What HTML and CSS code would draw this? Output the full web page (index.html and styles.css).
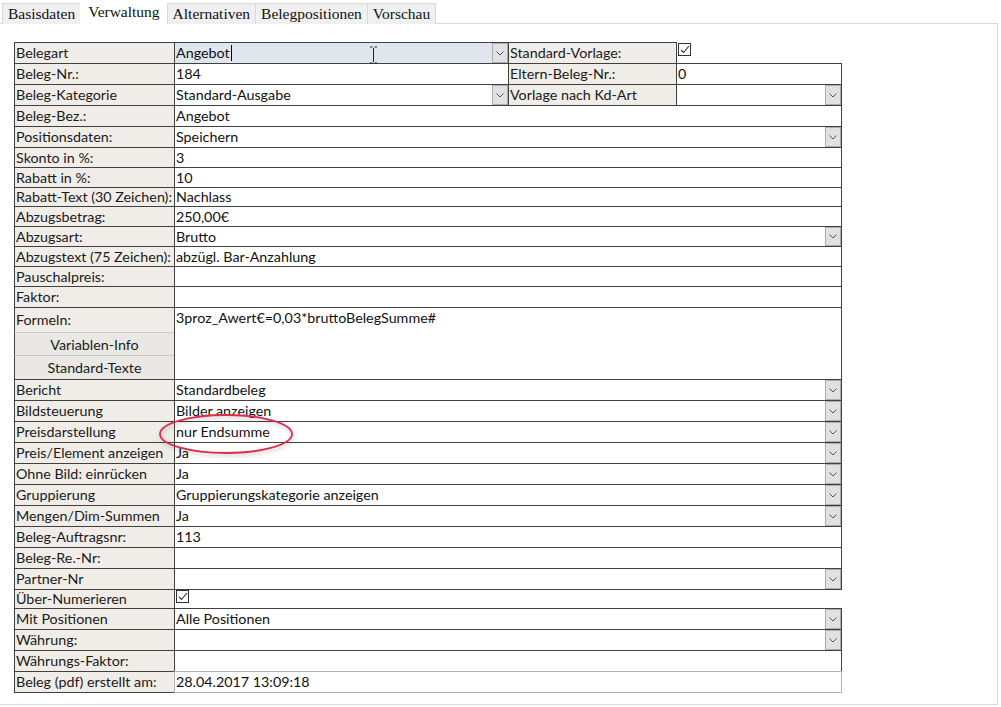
FILE: index.html
```html
<!DOCTYPE html>
<html lang="de">
<head>
    <meta charset="UTF-8">
    <title>Beleg - Verwaltung</title>
    <link rel="stylesheet" href="styles.css">
</head>
<body>
    <div class="tabs">
        <span class="tab">Basisdaten</span>
        <span class="tab active">Verwaltung</span>
        <span class="tab">Alternativen</span>
        <span class="tab">Belegpositionen</span>
        <span class="tab">Vorschau</span>
    </div>

    <div class="panel">
        <div class="form">
            <!-- Kopfbereich mit zweiter Spalte -->
            <div class="row h21">
                <div class="cell lbl">Belegart</div>
                <div class="cell val w-mid focus">Angebot<span class="caret"></span><span class="drop"><svg width="8" height="5"><path d="M0.5 0.5 L4 4 L7.5 0.5" /></svg></span></div>
                <div class="cell lbl w-lbl2">Standard-Vorlage:</div>
                <div class="check"><svg width="11" height="11"><path d="M2 6 L4.5 8.5 L10 2" /></svg></div>
            </div>
            <div class="row h21">
                <div class="cell lbl">Beleg-Nr.:</div>
                <div class="cell val w-mid">184</div>
                <div class="cell lbl w-lbl2">Eltern-Beleg-Nr.:</div>
                <div class="cell val w-right">0</div>
            </div>
            <div class="row h21">
                <div class="cell lbl">Beleg-Kategorie</div>
                <div class="cell val w-mid">Standard-Ausgabe<span class="drop"><svg width="8" height="5"><path d="M0.5 0.5 L4 4 L7.5 0.5" /></svg></span></div>
                <div class="cell lbl w-lbl2">Vorlage nach Kd-Art</div>
                <div class="cell val w-right"><span class="drop"><svg width="8" height="5"><path d="M0.5 0.5 L4 4 L7.5 0.5" /></svg></span></div>
            </div>

            <div class="row h21"><div class="cell lbl">Beleg-Bez.:</div><div class="cell val">Angebot</div></div>
            <div class="row h21"><div class="cell lbl">Positionsdaten:</div><div class="cell val">Speichern<span class="drop"><svg width="8" height="5"><path d="M0.5 0.5 L4 4 L7.5 0.5" /></svg></span></div></div>
            <div class="row h20"><div class="cell lbl">Skonto in %:</div><div class="cell val">3</div></div>
            <div class="row h20"><div class="cell lbl">Rabatt in %:</div><div class="cell val">10</div></div>
            <div class="row h19"><div class="cell lbl">Rabatt-Text (30 Zeichen):</div><div class="cell val">Nachlass</div></div>
            <div class="row h20"><div class="cell lbl">Abzugsbetrag:</div><div class="cell val">250,00€</div></div>
            <div class="row h20"><div class="cell lbl">Abzugsart:</div><div class="cell val">Brutto<span class="drop"><svg width="8" height="5"><path d="M0.5 0.5 L4 4 L7.5 0.5" /></svg></span></div></div>
            <div class="row h20"><div class="cell lbl">Abzugstext (75 Zeichen):</div><div class="cell val">abzügl. Bar-Anzahlung</div></div>
            <div class="row h20"><div class="cell lbl">Pauschalpreis:</div><div class="cell val"></div></div>
            <div class="row h21"><div class="cell lbl">Faktor:</div><div class="cell val"></div></div>

            <!-- Formeln mit Schaltflächen -->
            <div class="row formel">
                <div class="lbl-stack">
                    <div class="cell lbl h25">Formeln:</div>
                    <button class="btn">Variablen-Info</button>
                    <button class="btn">Standard-Texte</button>
                </div>
                <div class="cell val top">3proz_Awert€=0,03*bruttoBelegSumme#</div>
            </div>

            <div class="row h21"><div class="cell lbl">Bericht</div><div class="cell val">Standardbeleg<span class="drop"><svg width="8" height="5"><path d="M0.5 0.5 L4 4 L7.5 0.5" /></svg></span></div></div>
            <div class="row h21"><div class="cell lbl">Bildsteuerung</div><div class="cell val">Bilder anzeigen<span class="drop"><svg width="8" height="5"><path d="M0.5 0.5 L4 4 L7.5 0.5" /></svg></span></div></div>
            <div class="row h21"><div class="cell lbl">Preisdarstellung</div><div class="cell val">nur Endsumme<span class="drop"><svg width="8" height="5"><path d="M0.5 0.5 L4 4 L7.5 0.5" /></svg></span></div></div>
            <div class="row h21"><div class="cell lbl">Preis/Element anzeigen</div><div class="cell val">Ja<span class="drop"><svg width="8" height="5"><path d="M0.5 0.5 L4 4 L7.5 0.5" /></svg></span></div></div>
            <div class="row h21"><div class="cell lbl">Ohne Bild: einrücken</div><div class="cell val">Ja<span class="drop"><svg width="8" height="5"><path d="M0.5 0.5 L4 4 L7.5 0.5" /></svg></span></div></div>
            <div class="row h21"><div class="cell lbl">Gruppierung</div><div class="cell val">Gruppierungskategorie anzeigen<span class="drop"><svg width="8" height="5"><path d="M0.5 0.5 L4 4 L7.5 0.5" /></svg></span></div></div>
            <div class="row h21"><div class="cell lbl">Mengen/Dim-Summen</div><div class="cell val">Ja<span class="drop"><svg width="8" height="5"><path d="M0.5 0.5 L4 4 L7.5 0.5" /></svg></span></div></div>
            <div class="row h21"><div class="cell lbl">Beleg-Auftragsnr:</div><div class="cell val">113</div></div>
            <div class="row h21"><div class="cell lbl">Beleg-Re.-Nr:</div><div class="cell val"></div></div>
            <div class="row h21"><div class="cell lbl">Partner-Nr</div><div class="cell val"><span class="drop"><svg width="8" height="5"><path d="M0.5 0.5 L4 4 L7.5 0.5" /></svg></span></div></div>
            <div class="row h19">
                <div class="cell lbl">Über-Numerieren</div>
                <div class="check"><svg width="11" height="11"><path d="M2 6 L4.5 8.5 L10 2" /></svg></div>
            </div>
            <div class="row h21"><div class="cell lbl">Mit Positionen</div><div class="cell val">Alle Positionen<span class="drop"><svg width="8" height="5"><path d="M0.5 0.5 L4 4 L7.5 0.5" /></svg></span></div></div>
            <div class="row h21"><div class="cell lbl">Währung:</div><div class="cell val"><span class="drop"><svg width="8" height="5"><path d="M0.5 0.5 L4 4 L7.5 0.5" /></svg></span></div></div>
            <div class="row h21"><div class="cell lbl">Währungs-Faktor:</div><div class="cell val"></div></div>
            <div class="row h21"><div class="cell lbl">Beleg (pdf) erstellt am:</div><div class="cell val locked">28.04.2017 13:09:18</div></div>
        </div>

        <!-- Markierung und Mauszeiger -->
        <svg class="mark" width="140" height="46">
            <ellipse cx="70" cy="23" rx="66" ry="19" />
        </svg>
        <svg class="ibeam" width="9" height="18">
            <path d="M1 1 H3.5 M5.5 1 H8 M4.5 2 V16 M1 17 H3.5 M5.5 17 H8" />
        </svg>
    </div>
</body>
</html>
```

FILE: styles.css
```css
body {
    margin: 0;
    background: #fff;
    font-family: Lato, "Liberation Sans", sans-serif;
    font-size: 14.3px;
    color: #111;
}
.tabs {
    display: flex;
    align-items: flex-end;
    height: 24px;
    padding-left: 3px;
    position: relative;
    z-index: 1;
}
.tab {
    font-family: "Liberation Serif", serif;
    font-size: 15.5px;
    height: 21px;
    line-height: 20px;
    padding: 0 5px;
    background: #f0f0f0;
    border: 1px solid #d9d9d9;
    border-bottom: none;
    margin-left: -1px;
    box-sizing: border-box;
    color: #111;
}
.tab.active {
    background: #fff;
    height: 24px;
    line-height: 22px;
    padding: 0 7px;
    border-color: #fff;
}
.panel {
    position: relative;
    margin-top: -1px;
    height: 682px;
    width: 998px;
    box-sizing: border-box;
    border: 1px solid #d9d9d9;
    border-left: none;
    padding: 19px 0 0 15px;
}
.form {
    display: flex;
    flex-direction: column;
}
.row {
    display: flex;
    margin-top: -1px;
}
.h19 { height: 20px; }
.h20 { height: 21px; }
.h21 { height: 22px; }
.h25 { height: 26px; }
.cell {
    box-sizing: border-box;
    border: 1px solid #404040;
    margin-left: -1px;
    padding: 0 1px;
    display: flex;
    align-items: center;
    white-space: nowrap;
    line-height: 18px;
}
.lbl {
    width: 161px;
    background: #f0ede9;
    color: #1a1a1a;
}
.val {
    width: 668px;
    background: #fff;
    position: relative;
}
.w-mid { width: 335px; }
.w-lbl2 { width: 169px; }
.w-right { width: 166px; }
.focus { background: #dfe6ee; }
.caret {
    display: inline-block;
    width: 1px;
    height: 16px;
    background: #000;
    margin-left: 1px;
}
.locked { border-color: #b4b4b4; }
.top { align-items: flex-start; padding-top: 1px; }
.drop {
    margin-left: auto;
    margin-right: -1px;
    align-self: stretch;
    width: 16px;
    box-sizing: border-box;
    background: #e1e1e1;
    border: 1px solid #adadad;
    display: flex;
    align-items: center;
    justify-content: center;
}
.drop svg path {
    fill: none;
    stroke: #555;
    stroke-width: 1;
}
.check {
    width: 13px;
    height: 13px;
    box-sizing: border-box;
    border: 1px solid #333;
    background: #fff;
    margin-left: 1px;
    margin-top: 1px;
    display: flex;
    align-items: center;
    justify-content: center;
}
.check svg path {
    fill: none;
    stroke: #333;
    stroke-width: 1.1;
}
.formel .val { height: 73px; }
.lbl-stack {
    display: flex;
    flex-direction: column;
    width: 161px;
    margin-left: -1px;
}
.lbl-stack .lbl { margin-left: 0; }
.btn {
    font-family: inherit;
    font-size: 14.3px;
    color: #1a1a1a;
    height: 24px;
    margin: -1px 0 0 0;
    padding: 0;
    background: #eae8e5;
    border: 1px solid #c8c8c8;
    border-right-color: #404040;
    border-left-color: #404040;
}
.btn + .btn { height: 25px; }
.mark {
    position: absolute;
    left: 156px;
    top: 387px;
    overflow: visible;
}
.mark ellipse {
    fill: none;
    stroke: #dd2a50;
    stroke-width: 1.8;
    filter: drop-shadow(1px 2px 2px rgba(0, 0, 0, 0.25));
}
.ibeam {
    position: absolute;
    left: 369px;
    top: 22px;
}
.ibeam path {
    fill: none;
    stroke: #222;
    stroke-width: 1;
}
```
